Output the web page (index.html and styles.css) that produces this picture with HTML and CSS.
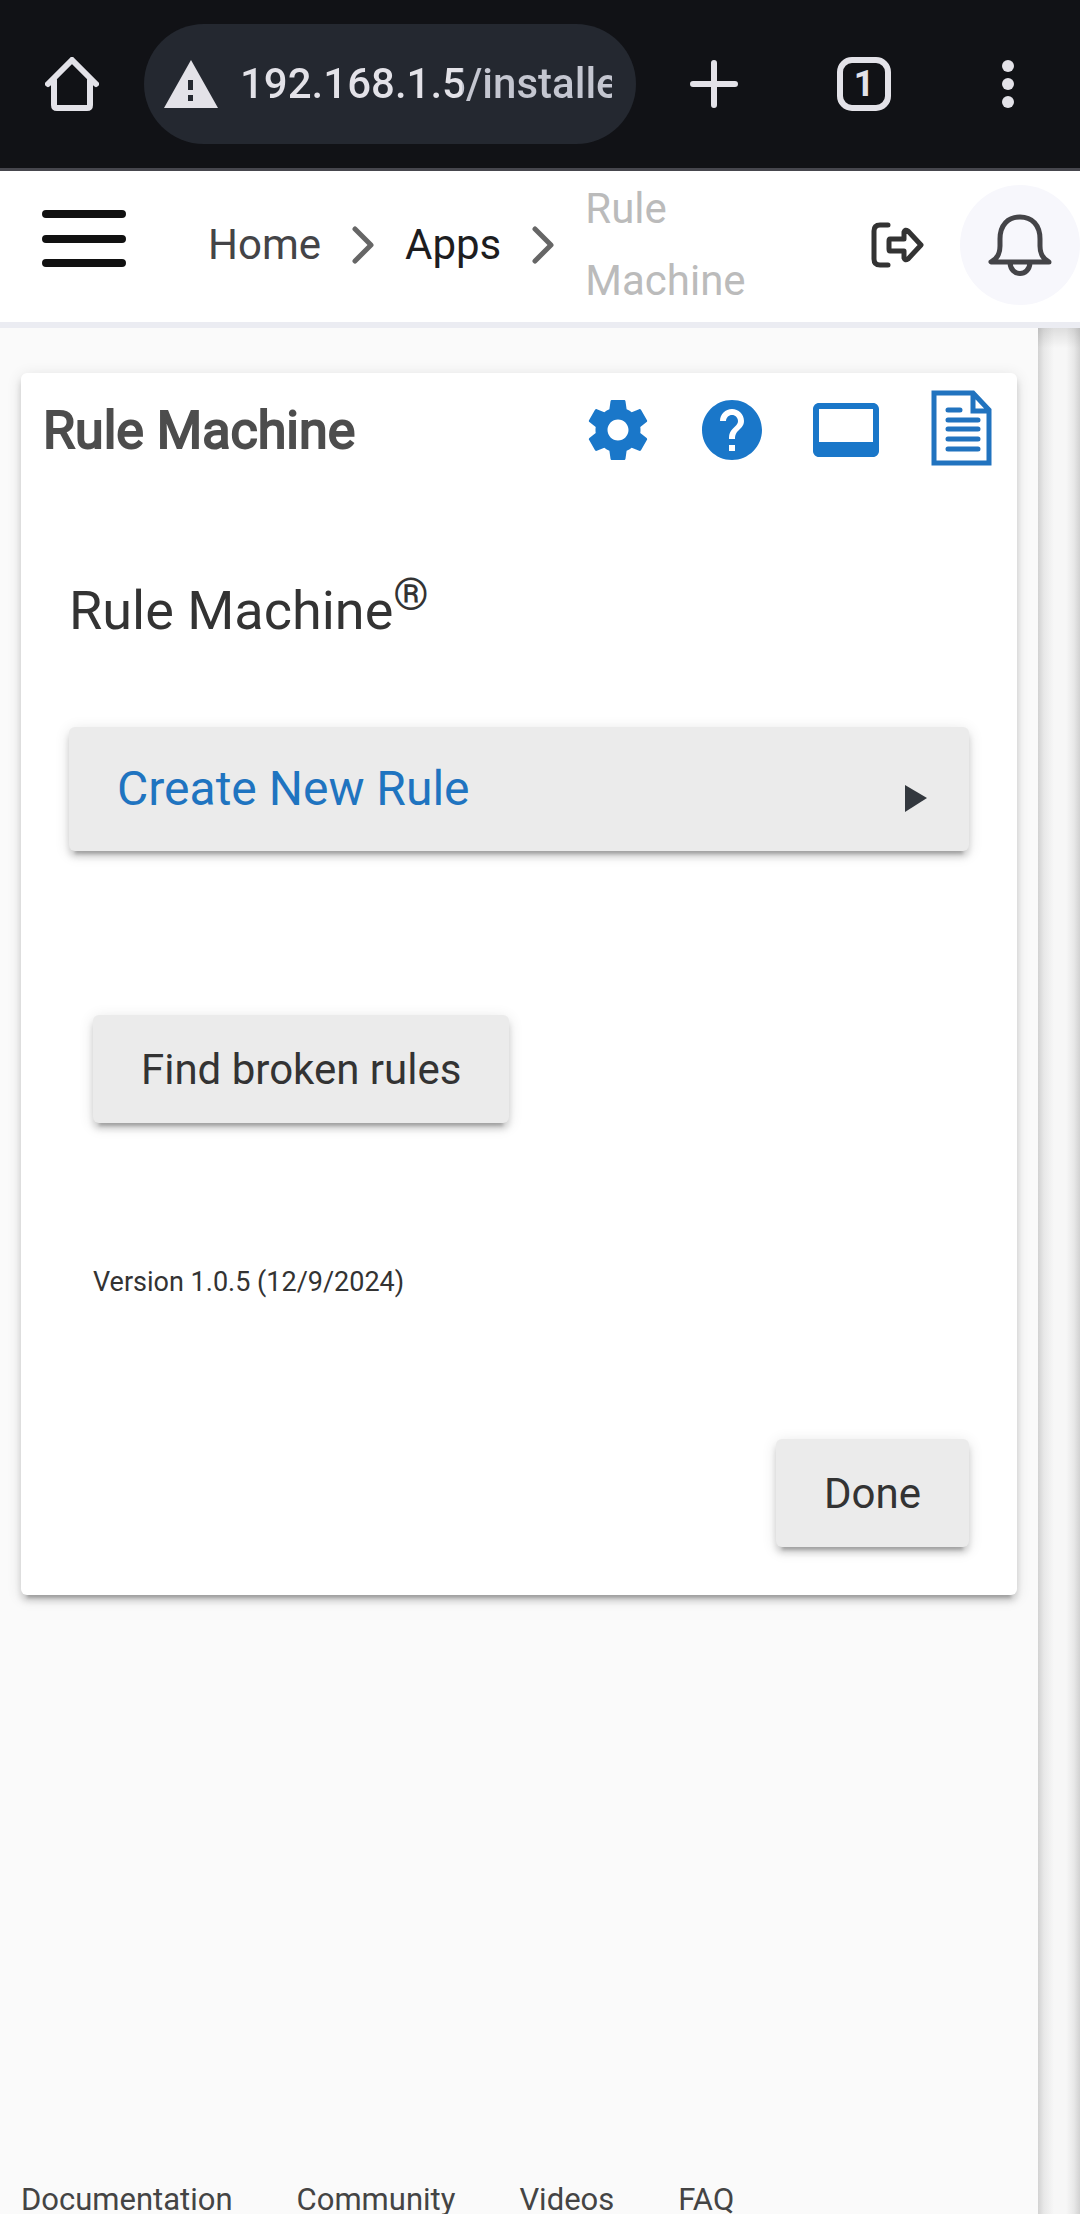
FILE: index.html
```html
<!DOCTYPE html>
<html lang="en">
<head>
  <meta charset="UTF-8" />
  <meta name="viewport" content="width=device-width, initial-scale=1.0" />
  <title>Rule Machine</title>
  <link rel="stylesheet" href="styles.css">
</head>
<body>
  <div class="browser-bar">
    <button class="bar-btn" aria-label="Home page">
      <svg width="54" height="54" viewBox="0 0 54 54" fill="none" stroke="currentColor" stroke-width="6" stroke-linecap="round" stroke-linejoin="round"><path d="M3 27L27 3l24 24M9 23v25q0 3 3 3h30q3 0 3-3V23"/></svg>
    </button>
    <div class="address">
      <svg width="54" height="48" viewBox="0 0 54 48"><path fill="currentColor" fill-rule="evenodd" d="M27 0l27 48H0zM24 20v10h5V20zM24 35v6h5v-6z"/></svg>
      <input type="text" class="url" aria-label="Address" value="192.168.1.5/installedapp/configure" />
    </div>
    <button class="bar-btn new-tab" aria-label="New tab">
      <svg width="48" height="48" viewBox="0 0 48 48" stroke="currentColor" stroke-width="6" stroke-linecap="round"><path d="M24 3v42M3 24h42"/></svg>
    </button>
    <button class="bar-btn" aria-label="Tabs"><span class="tab-count">1</span></button>
    <button class="bar-btn" aria-label="More">
      <svg width="12" height="48" viewBox="0 0 12 48" fill="currentColor"><circle cx="6" cy="6" r="6"/><circle cx="6" cy="24" r="6"/><circle cx="6" cy="42" r="6"/></svg>
    </button>
  </div>

  <header class="app-header">
    <button class="menu" aria-label="Menu">
      <svg width="84" height="71" viewBox="0 0 84 71" stroke="currentColor" stroke-width="8" stroke-linecap="round"><path d="M4 4h76M4 29h76M4 53h76"/></svg>
    </button>
    <nav class="breadcrumb">
      <a href="#" class="crumb">Home</a>
      <svg class="chevron" width="22" height="38" viewBox="0 0 22 38"><path d="M3 3l16 16L3 35"/></svg>
      <a href="#" class="crumb apps">Apps</a>
      <svg class="chevron" width="22" height="38" viewBox="0 0 22 38"><path d="M3 3l16 16L3 35"/></svg>
      <span class="crumb current">Rule Machine</span>
    </nav>
    <button class="logout" aria-label="Log out">
      <svg width="54" height="48" viewBox="0 0 54 48" fill="none" stroke="currentColor" stroke-width="5" stroke-linecap="round" stroke-linejoin="round"><path d="M18 4H10Q4 4 4 10v28q0 6 6 6h8M20 18h14V11q1-3 4-1l13 14-13 14q-3 2-4-1v-7H20Q19 30 19 28v-8q0-2 1-2z"/></svg>
    </button>
    <button class="bell" aria-label="Notifications">
      <svg width="66" height="62" viewBox="0 0 66 62" fill="none" stroke="currentColor" stroke-width="5" stroke-linecap="round" stroke-linejoin="round"><path d="M4 48h58c-6-3-9-8-9-16v-7C53 11 45 3 33 3S13 11 13 25v7c0 8-3 13-9 16zM23 49c1 14 19 14 20 0"/></svg>
    </button>
  </header>

  <div class="page">
    <main class="main">
      <section class="card">
        <div class="card-header">
          <h1>Rule Machine</h1>
          <div class="card-icons">
            <a href="#" aria-label="Settings"><svg viewBox="0 0 24 24"><path d="M19.43 12.98c.04-.32.07-.64.07-.98s-.03-.66-.07-.98l2.11-1.65c.19-.15.24-.42.12-.64l-2-3.46c-.12-.22-.39-.3-.61-.22l-2.49 1c-.52-.4-1.08-.73-1.69-.98l-.38-2.65C14.46 2.18 14.25 2 14 2h-4c-.25 0-.46.18-.49.42l-.38 2.65c-.61.25-1.17.59-1.69.98l-2.49-1c-.23-.09-.49 0-.61.22l-2 3.46c-.13.22-.07.49.12.64l2.11 1.65c-.04.32-.07.65-.07.98s.03.66.07.98l-2.11 1.65c-.19.15-.24.42-.12.64l2 3.46c.12.22.39.3.61.22l2.49-1c.52.4 1.08.73 1.69.98l.38 2.65c.03.24.24.42.49.42h4c.25 0 .46-.18.49-.42l.38-2.65c.61-.25 1.17-.59 1.69-.98l2.49 1c.23.09.49 0 .61-.22l2-3.46c.12-.22.07-.49-.12-.64l-2.11-1.65zM12 15.5c-1.93 0-3.5-1.57-3.5-3.5s1.57-3.5 3.5-3.5 3.5 1.57 3.5 3.5-1.57 3.5-3.5 3.5z"/></svg></a>
            <a href="#" aria-label="Help"><svg viewBox="0 0 24 24"><path d="M12 2C6.480 2 2 6.480 2 12s4.480 10 10 10 10-4.480 10-10S17.520 2 12 2zm1 17h-2v-2h2v2zm2.070-7.750l-.9.92C13.450 12.900 13 13.500 13 15h-2v-.5c0-1.100.45-2.100 1.170-2.830l1.240-1.260c.37-.36.59-.86.59-1.410 0-1.100-.9-2-2-2s-2 .9-2 2H8c0-2.210 1.790-4 4-4s4 1.790 4 4c0 .88-.36 1.680-.93 2.250z"/></svg></a>
            <a href="#" aria-label="Display"><svg viewBox="0 0 24 24"><path d="M21 3H3c-1.100 0-2 .9-2 2v14c0 1.100.9 2 2 2h18c1.100 0 2-.9 2-2V5c0-1.100-.9-2-2-2zm0 13H3V5h18v11z"/></svg></a>
            <a href="#" aria-label="Logs"><svg class="doc" viewBox="0 0 72 72"><path d="M10 -1h39l16 17v53H10zM49 -1v18h16M24 16h12M24 26h30M24 35h30M24 45h30M24 55h30"/></svg></a>
          </div>
        </div>

        <div class="card-body">
          <h2>Rule Machine<sup>®</sup></h2>
          <button class="btn create">
            <span>Create New Rule</span>
            <svg width="22" height="48" viewBox="0 0 22 48"><path fill="#33383e" d="M0 8l22 13L0 35z"/></svg>
          </button>
          <div class="inset">
            <button class="btn">Find broken rules</button>
            <p class="version">Version 1.0.5 (12/9/2024)</p>
          </div>
          <div class="actions">
            <button class="btn">Done</button>
          </div>
        </div>
      </section>

      <footer class="footer">
        <a href="#">Documentation</a>
        <a href="#">Community</a>
        <a href="#">Videos</a>
        <a href="#">FAQ</a>
      </footer>
    </main>
    <aside class="side"></aside>
  </div>
</body>
</html>
```

FILE: styles.css
```css
* {
  box-sizing: border-box;
}
body {
  margin: 0;
  min-height: 100vh;
  display: flex;
  flex-direction: column;
  font-family: Roboto, sans-serif;
  font-size: 42px;
  color: #333;
  background: #fafafa;
}
button {
  font: inherit;
  color: inherit;
  border: 0;
  padding: 0;
  background: none;
  cursor: pointer;
}
a {
  color: inherit;
  text-decoration: none;
}
svg {
  display: block;
  flex: none;
}

/* browser toolbar */
.browser-bar {
  display: flex;
  align-items: center;
  padding: 24px 0;
  background: #111216;
  border-bottom: 3px solid #46464d;
  color: #e3e2e8;
}
.bar-btn {
  width: 144px;
  display: flex;
  justify-content: center;
}
.new-tab {
  width: 156px;
}
.address {
  flex: 1;
  min-width: 0;
  height: 120px;
  display: flex;
  align-items: center;
  gap: 22px;
  padding: 0 24px 0 20px;
  border-radius: 60px;
  background: #242830;
}
.url {
  flex: 1;
  min-width: 0;
  padding: 0;
  border: 0;
  outline: 0;
  font: 500 42px/60px Roboto, sans-serif;
  /* host is brighter than the path */
  color: transparent;
  background: linear-gradient(90deg, #e3e2e8 222px, #c4c6d0 222px);
  -webkit-background-clip: text;
  background-clip: text;
}
.tab-count {
  width: 54px;
  height: 54px;
  border: 6px solid;
  border-radius: 15px;
  font-size: 36px;
  font-weight: 700;
  line-height: 42px;
}

/* app header */
.app-header {
  display: flex;
  align-items: center;
  height: 157px;
  padding: 0 0 3px 42px;
  background: #fff;
  border-bottom: 6px solid #ebecf2;
}
.menu {
  color: #111;
}
.breadcrumb {
  flex: 1;
  display: flex;
  align-items: center;
  gap: 31px;
  margin-left: 82px;
  line-height: 72px;
}
.crumb {
  color: #444447;
}
.crumb.apps {
  color: #1d1d1f;
}
.crumb.current {
  width: min-content;
  color: #bbb;
}
.chevron {
  fill: none;
  stroke: #666;
  stroke-width: 5;
  stroke-linecap: round;
  stroke-linejoin: round;
}
.logout {
  margin-right: 36px;
}
.bell {
  width: 120px;
  height: 120px;
  display: flex;
  align-items: center;
  justify-content: center;
  border-radius: 50%;
  background: #f7f7fc;
  color: #444448;
}

/* page */
.page {
  flex: 1;
  display: flex;
  overflow: hidden;
}
.main {
  flex: 1;
  display: flex;
  flex-direction: column;
  padding: 45px 21px 0;
}
.side {
  width: 42px;
  background:
    linear-gradient(rgba(0, 0, 0, 0.1), transparent 20px),
    linear-gradient(90deg, #d2d2d2, #e8e8e8 6px, #f7f7f7 16px, #f7f7f7 28px, #e8e8e8 36px, #d2d2d2);
}
.card,
.btn {
  border-radius: 6px;
  box-shadow:
    0 6px 6px rgba(0, 0, 0, 0.14),
    0 9px 3px -6px rgba(0, 0, 0, 0.2),
    0 3px 15px rgba(0, 0, 0, 0.12);
}
.card {
  background: #fff;
}
.card-header {
  display: flex;
  align-items: center;
  justify-content: space-between;
  height: 114px;
  padding: 0 21px 0 22px;
}
h1 {
  margin: 0;
  font-size: 52px;
  font-weight: 400;
  color: #4d4d4d;
  -webkit-text-stroke: 2px #4d4d4d;
}
.card-icons {
  display: flex;
  gap: 42px;
}
.card-icons svg {
  width: 72px;
  height: 72px;
  fill: #1a77c9;
}
.card-icons .doc {
  overflow: visible;
  fill: none;
  stroke: #2173bf;
  stroke-width: 5;
  stroke-linecap: round;
}
.card-body {
  padding: 88px 48px 48px;
}
h2 {
  margin: 0 0 80px;
  font-size: 54px;
  font-weight: 400;
  line-height: 72px;
}
sup {
  font-size: 45px;
  line-height: 0;
}
.btn {
  min-height: 108px;
  padding: 0 48px;
  background: #ebebeb;
}
.create {
  width: 100%;
  display: flex;
  align-items: flex-end;
  justify-content: space-between;
  padding: 26px 42px 26px 48px;
  font-size: 48px;
  line-height: 72px;
  color: #1f74c0;
}
.inset {
  padding: 164px 24px 0;
}
.version {
  margin: 138px 0 136px;
  font-size: 27px;
  line-height: 42px;
}
.actions {
  display: flex;
  justify-content: flex-end;
}
.footer {
  display: flex;
  gap: 64px;
  margin-top: auto;
  font-size: 31px;
  line-height: 28px;
  color: #444;
}
```
